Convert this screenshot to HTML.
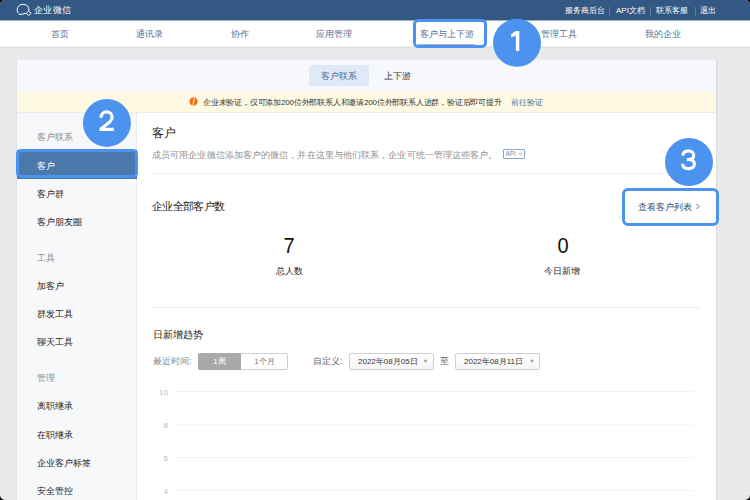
<!DOCTYPE html>
<html><head><meta charset="utf-8">
<style>
*{margin:0;padding:0;box-sizing:border-box}
html,body{width:750px;height:500px;overflow:hidden;background:#000}
body{font-family:"Liberation Sans",sans-serif;color:#333;position:relative}
#page{position:absolute;left:0;top:0;width:750px;height:500px;background:#e8e9eb;border-radius:5px;overflow:hidden}
.a{position:absolute;white-space:nowrap;line-height:1}
#top{position:absolute;left:0;top:0;width:750px;height:20px;background:#335883;border-bottom:1px solid #31557f}
#nav{position:absolute;left:0;top:20px;width:750px;height:26px;background:#fff}
#navshadow{position:absolute;left:0;top:46px;width:750px;height:2px;background:linear-gradient(#f1f1f2 50%,#dedfe1 50%)}
.nv{font-size:8.6px;color:#587293;top:30px}
.tl{font-size:8px;color:#fff;top:6.8px}
.sep{position:absolute;top:6.5px;width:1px;height:9px;background:#5f7b9e}
#card{position:absolute;left:17px;top:60px;width:699px;height:460px;background:#fff;border-radius:2px;box-shadow:1px 0 1px rgba(0,0,0,.07),-1px 0 1px rgba(0,0,0,.04)}
#cardtop{position:absolute;left:18px;top:59px;width:697px;height:1px;background:#eff0f2}
#tabs{position:absolute;left:0;top:0;width:699px;height:32px;background:#f6f8fb;border-radius:2px 2px 0 0}
#notice{position:absolute;left:0;top:32px;width:699px;height:21px;background:#fef9e3;border-bottom:1px solid #e8ecf2}
#side{position:absolute;left:0;top:53px;width:120px;height:420px;background:#f7f8fa;border-right:1px solid #e9ebef}
.sh{font-size:9px;color:#8c8c8c}
.si{font-size:9px;color:#1f1f1f}
.hl{position:absolute;border:3px solid #4b93ee;border-radius:5px}
.circ{position:absolute;width:48px;height:48px;border-radius:50%;background:#4b93ee;color:#fff;font-size:28px;text-align:center;line-height:48px;-webkit-text-stroke:0.5px #fff}
.grid{position:absolute;left:177px;width:516px;height:0;border-top:1px dashed #e3e3e3}
.yl{font-size:8px;color:#bbb;text-align:right;width:20px}
.dd{position:absolute;top:353px;height:17px;border:1px solid #cfcfcf;border-radius:2px;background:linear-gradient(#fff,#f6f6f6);font-size:8.5px;color:#333}
</style></head><body>
<div id="page">
  <div id="top">
    <svg style="position:absolute;left:0;top:0" width="40" height="20" viewBox="0 0 40 20">
      <path d="M19.4 14.3 C17.9 13.2 17.2 11.5 17.2 9.5 C17.2 6.4 19.8 4.3 23.1 4.3 C26.4 4.3 28.9 6.4 28.9 9.3 C28.9 10 28.8 10.5 28.7 11.2" fill="none" stroke="#fff" stroke-width="1"/>
      <path d="M19.4 14.3 L19.3 14.6 L26.3 13.3" fill="none" stroke="#fff" stroke-width="1"/>
      <path d="M28.8 11.1 L31.2 13.4 L28.5 15.6 L26.3 13.3 Z" fill="none" stroke="#fff" stroke-width="0.9"/>
    </svg>
    <div class="a" style="left:33.5px;top:6px;font-size:9.3px;letter-spacing:0.5px;color:#fff">企业微信</div>
    <div class="a tl" style="left:565px">服务商后台</div>
    <div class="sep" style="left:609px"></div>
    <div class="a tl" style="left:616px">API文档</div>
    <div class="sep" style="left:650px"></div>
    <div class="a tl" style="left:656px">联系客服</div>
    <div class="sep" style="left:695px"></div>
    <div class="a tl" style="left:700px">退出</div>
  </div>
  <div id="nav"></div>
  <div style="position:absolute;left:0;top:20px;width:750px;height:1px;background:rgba(51,88,131,.45)"></div>
  <div style="position:absolute;left:0;top:21px;width:750px;height:1px;background:rgba(51,88,131,.06)"></div>
  <div id="navshadow"></div>
  <div class="a nv" style="left:51px">首页</div>
  <div class="a nv" style="left:136px">通讯录</div>
  <div class="a nv" style="left:231px">协作</div>
  <div class="a nv" style="left:316px">应用管理</div>
  <div class="a nv" style="left:420px">客户与上下游</div>
  <div style="position:absolute;left:418px;top:44px;width:57px;height:1px;background:#aab5c3"></div>
  <div class="a nv" style="left:541px">管理工具</div>
  <div class="a nv" style="left:645px">我的企业</div>

  <div id="cardtop"></div>
  <div id="card">
    <div id="tabs">
      <div style="position:absolute;left:292px;top:5px;width:60px;height:21px;background:#dfe9f7;border-radius:2px"></div>
      <div class="a" style="left:304px;top:12px;font-size:8.6px;color:#4f6f98">客户联系</div>
      <div class="a" style="left:367px;top:12px;font-size:8.6px;color:#333">上下游</div>
    </div>
    <div id="notice">
      <svg style="position:absolute;left:172px;top:5px" width="9" height="9" viewBox="0 0 9 9"><circle cx="4.6" cy="4.5" r="4" fill="#fb6a0c"/><path d="M5.4 1.6 Q4.7 4.4 3.9 7.6" fill="none" stroke="#fff" stroke-width="1.05"/></svg>
      <div class="a" style="left:186px;top:7px;font-size:8px;letter-spacing:-0.195px;color:#333">企业未验证，仅可添加200位外部联系人和邀请200位外部联系人进群，验证后即可提升</div>
      <div class="a" style="left:494px;top:7px;font-size:7.9px;color:#4f6f98">前往验证</div>
    </div>
    <div id="side">
      <div class="a sh" style="left:20px;top:20px">客户联系</div>
      <div style="position:absolute;left:0;top:37px;width:120px;height:29px;background:#4b78aa"></div>
      <div class="a si" style="left:20px;top:48.5px;color:#fff">客户</div>
      <div class="a si" style="left:20px;top:77px">客户群</div>
      <div class="a si" style="left:20px;top:105px">客户朋友圈</div>
      <div class="a sh" style="left:20px;top:141px">工具</div>
      <div class="a si" style="left:20px;top:169px">加客户</div>
      <div class="a si" style="left:20px;top:197px">群发工具</div>
      <div class="a si" style="left:20px;top:225px">聊天工具</div>
      <div class="a sh" style="left:20px;top:261px">管理</div>
      <div class="a si" style="left:20px;top:289px">离职继承</div>
      <div class="a si" style="left:20px;top:318px">在职继承</div>
      <div class="a si" style="left:20px;top:346px">企业客户标签</div>
      <div class="a si" style="left:20px;top:374px">安全管控</div>
    </div>
  </div>

  <!-- content (page coords) -->
  <div class="a" style="left:152px;top:127.7px;font-size:11.5px;color:#222">客户</div>
  <div class="a" style="left:152px;top:150.5px;font-size:9px;letter-spacing:0.09px;color:#8f8f8f">成员可用企业微信添加客户的微信，并在这里与他们联系，企业可统一管理这些客户。</div>
  <div style="position:absolute;left:503px;top:149px;width:22px;height:10px;border:1px solid #8aa6cc;border-radius:1px"></div><div class="a" style="left:505.5px;top:151px;font-size:6.4px;color:#6a8ab5">API</div><svg style="position:absolute;left:517.5px;top:151.5px" width="5" height="4" viewBox="0 0 5 4"><path d="M0.9 0.9 L2.5 2.6 L4.1 0.9" fill="none" stroke="#7d9cc4" stroke-width="1"/></svg>
  <div style="position:absolute;left:153px;top:173px;width:547px;height:1px;background:#e9ecf0"></div>

  <div class="a" style="left:152px;top:201px;font-size:10.5px;letter-spacing:-0.65px;color:#222">企业全部客户数</div>
  <div class="a" style="left:638px;top:202.5px;font-size:9px;color:#2f4c72">查看客户列表</div><svg style="position:absolute;left:695px;top:203px" width="6" height="7" viewBox="0 0 6 7"><path d="M1.5 1 L4 3.5 L1.5 6" fill="none" stroke="#3d5a7e" stroke-width="0.9"/></svg>

  <div class="a" style="left:239px;top:236.4px;width:100px;text-align:center;font-size:21.5px;color:#111;transform:scaleX(.93)">7</div>
  <div class="a" style="left:239px;top:266.5px;width:100px;text-align:center;font-size:9px;color:#222">总人数</div>
  <div class="a" style="left:512.8px;top:236.4px;width:100px;text-align:center;font-size:21.5px;color:#111;transform:scaleX(.93)">0</div>
  <div class="a" style="left:512px;top:266.5px;width:100px;text-align:center;font-size:9px;color:#222">今日新增</div>

  <div style="position:absolute;left:153px;top:307px;width:547px;height:1px;background:#ebedf0"></div>
  <div class="a" style="left:153px;top:330px;font-size:10px;color:#222">日新增趋势</div>

  <div class="a" style="left:153px;top:357px;font-size:8.5px;color:#888">最近时间:</div>
  <div style="position:absolute;left:198px;top:353px;width:90px;height:17px;border:1px solid #cfcfcf;border-radius:2px;background:#fff"></div>
  <div style="position:absolute;left:198px;top:353px;width:43px;height:17px;background:#a9a9a9;border-radius:2px 0 0 2px"></div>
  <div class="a" style="left:198px;top:357.8px;width:43px;text-align:center;font-size:8px;color:#fff">1周</div>
  <div class="a" style="left:241px;top:357.8px;width:47px;text-align:center;font-size:8px;color:#777">1个月</div>

  <div class="a" style="left:313px;top:357px;font-size:8.5px;color:#666">自定义:</div>
  <div class="dd" style="left:349px;width:85px"></div>
  <div class="a" style="left:358px;top:357.5px;font-size:8px;color:#333">2022年08月05日</div>
  
  <div class="a" style="left:440px;top:357px;font-size:8.5px;color:#666">至</div>
  <div class="dd" style="left:455px;width:85px"></div>
  <div class="a" style="left:464px;top:357.5px;font-size:8px;color:#333">2022年08月11日</div>
  

  <div class="a yl" style="left:148px;top:389px">10</div>
  
  <div class="a yl" style="left:148px;top:422px">8</div>
  
  <div class="a yl" style="left:148px;top:455px">6</div>
  
  <div class="a yl" style="left:148px;top:488px">4</div>
  

  <svg style="position:absolute;left:0;top:0" width="750" height="500"><g stroke="#ebebeb" stroke-width="1" stroke-dasharray="1.6 1"><line x1="177" y1="391.5" x2="693" y2="391.5"/><line x1="177" y1="425" x2="693" y2="425"/><line x1="177" y1="457.5" x2="693" y2="457.5"/><line x1="177" y1="490.5" x2="693" y2="490.5"/></g></svg>
  <svg style="position:absolute;left:0;top:0" width="750" height="500"><path d="M423.6 359.8 L427.6 359.8 L425.6 363 Z M529.9 359.8 L533.9 359.8 L531.9 363 Z" fill="#a0a0a0"/></svg>
  <!-- highlights -->
  <div class="hl" style="left:413px;top:19px;width:74px;height:29px"></div>
  <div class="hl" style="left:16px;top:149px;width:122px;height:29px"></div>
  <div class="hl" style="left:622px;top:188px;width:97px;height:38px;border-radius:6px"></div>
  <svg style="position:absolute;left:0;top:0" width="750" height="500" viewBox="0 0 750 500">
    <g fill="#4b93ee">
      <circle cx="517" cy="42.8" r="24"/>
      <circle cx="106.9" cy="122.9" r="24"/>
      <circle cx="689" cy="162" r="24"/>
    </g>
    <path d="M515.9 30.9 L519.3 30.9 L519.3 50.9 L515.9 50.9 L515.9 35.4 L511.2 37.6 L511.2 34.3 L515.6 30.9 Z" fill="#fff"/>
    <path d="M101.1 117.8 C101.1 114.1 103.5 111.9 106.7 111.9 C109.8 111.9 112.2 114 112.2 117 C112.2 119.2 111.2 120.6 109.4 122.3 L101 128.9 M99.5 129.4 L113.9 129.4" fill="none" stroke="#fff" stroke-width="3.1"/>
    <path d="M682.9 155.6 C683.1 152.6 685.3 150.9 688.5 150.9 C691.7 150.9 693.7 152.7 693.7 155.2 C693.7 157.9 691.6 159.5 688.6 159.5 L686.8 159.5 M688.6 159.5 C692 159.5 694.4 161.3 694.4 164.3 C694.4 167 691.9 168.6 688.5 168.6 C685.1 168.6 682.7 167 682.6 163.7" fill="none" stroke="#fff" stroke-width="3.1"/>
  </svg>
</div>
</body></html>
